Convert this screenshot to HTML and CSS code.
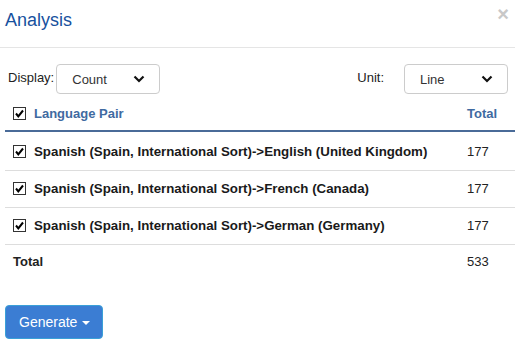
FILE: index.html
```html
<!DOCTYPE html>
<html>
<head>
<link rel="stylesheet" href="styles.css">
</head>
<body>
<div class="dialog">
  <div class="dialog-header">
    <h4 class="dialog-title">Analysis</h4>
    <span class="close">&times;</span>
  </div>
  <div class="dialog-body">
    <div class="options">
      <div class="option">
        <label>Display:</label>
        <div class="select">
          <span>Count</span>
          <svg width="12" height="8" viewBox="0 0 12 8"><polyline points="1.5,1.5 6,6 10.5,1.5" fill="none" stroke="#111" stroke-width="2.2"/></svg>
        </div>
      </div>
      <div class="option">
        <label class="unit-label">Unit:</label>
        <div class="select">
          <span>Line</span>
          <svg width="12" height="8" viewBox="0 0 12 8"><polyline points="1.5,1.5 6,6 10.5,1.5" fill="none" stroke="#111" stroke-width="2.2"/></svg>
        </div>
      </div>
    </div>
    <table class="pairs">
      <thead>
        <tr>
          <th><span class="check"><svg width="11" height="11" viewBox="0 0 11 11"><polyline points="2,5.5 4.3,8.3 9,2.5" fill="none" stroke="#000" stroke-width="2"/></svg></span>Language Pair</th>
          <th class="num">Total</th>
        </tr>
      </thead>
      <tbody>
        <tr class="first">
          <td class="pair"><span class="check"><svg width="11" height="11" viewBox="0 0 11 11"><polyline points="2,5.5 4.3,8.3 9,2.5" fill="none" stroke="#000" stroke-width="2"/></svg></span>Spanish (Spain, International Sort)-&gt;English (United Kingdom)</td>
          <td class="num">177</td>
        </tr>
        <tr>
          <td class="pair"><span class="check"><svg width="11" height="11" viewBox="0 0 11 11"><polyline points="2,5.5 4.3,8.3 9,2.5" fill="none" stroke="#000" stroke-width="2"/></svg></span>Spanish (Spain, International Sort)-&gt;French (Canada)</td>
          <td class="num">177</td>
        </tr>
        <tr>
          <td class="pair"><span class="check"><svg width="11" height="11" viewBox="0 0 11 11"><polyline points="2,5.5 4.3,8.3 9,2.5" fill="none" stroke="#000" stroke-width="2"/></svg></span>Spanish (Spain, International Sort)-&gt;German (Germany)</td>
          <td class="num">177</td>
        </tr>
        <tr class="total">
          <td><b>Total</b></td>
          <td class="num">533</td>
        </tr>
      </tbody>
    </table>
  </div>
  <div class="dialog-footer">
    <button class="btn-generate">Generate <span class="caret"></span></button>
  </div>
</div>
</body>
</html>
```

FILE: styles.css
```css
body {
  margin: 0;
  font-family: "Liberation Sans", Arial, sans-serif;
  font-size: 13px;
  color: #222;
  background: #fff;
}
.dialog {
  width: 515px;
}
.dialog-header {
  display: flex;
  justify-content: space-between;
  align-items: flex-start;
  height: 47px;
  padding: 0 7px 0 5px;
  border-bottom: 1px solid #e5e5e5;
}
.dialog-title {
  margin: 10px 0 0 0;
  font-size: 18px;
  font-weight: normal;
  line-height: 20px;
  color: #17519e;
}
.close {
  margin-top: 4px;
  margin-right: -1px;
  font-size: 20px;
  font-weight: bold;
  line-height: 20px;
  color: #c8c8c8;
}
.dialog-body {
  padding: 16px 0 0 5px;
}
.options {
  display: flex;
  justify-content: space-between;
  padding: 0 7px 0 3px;
}
.option {
  display: flex;
  align-items: flex-start;
}
.option label {
  line-height: 27px;
  margin-right: 2px;
}
.option .unit-label {
  margin-right: 20px;
}
.select {
  display: flex;
  justify-content: space-between;
  align-items: center;
  box-sizing: border-box;
  width: 104px;
  height: 30px;
  padding: 0 14px 0 15px;
  border: 1px solid #ccc;
  border-radius: 4px;
  color: #333;
}
.pairs {
  width: 510px;
  margin-top: 2px;
  border-collapse: collapse;
}
.pairs th {
  text-align: left;
  font-weight: bold;
  color: #3f6aa1;
  padding: 9px 8px 7px 8px;
  line-height: 18px;
  border-bottom: 2px solid #4a6b98;
}
.pairs td {
  padding: 9px 8px;
  line-height: 18px;
  border-bottom: 1px solid #ddd;
}
.pairs .first td {
  padding-top: 11px;
}
.pairs .pair {
  font-size: 13.3px;
  font-weight: bold;
  color: #1a1a1a;
}
.pairs .num {
  width: 40px;
  text-align: left;
}
.pairs td.num {
  color: #222;
}
.pairs .total td {
  padding-top: 8px;
  border-bottom: none;
}
.check {
  display: inline-block;
  box-sizing: border-box;
  width: 13px;
  height: 13px;
  margin-right: 8px;
  vertical-align: -2px;
  border: 1px solid #333;
  background: #fff;
}
.check svg {
  display: block;
}
.dialog-footer {
  padding: 25px 0 0 5px;
}
.btn-generate {
  box-sizing: border-box;
  width: 98px;
  height: 34px;
  padding: 0 10px 0 13px;
  text-align: left;
  white-space: nowrap;
  font-family: "Liberation Sans", Arial, sans-serif;
  font-size: 14px;
  color: #fff;
  background: #3b7dd3;
  border: 1px solid #3aa0d8;
  border-radius: 4px;
}
.caret {
  display: inline-block;
  width: 0;
  height: 0;
  margin-left: 1px;
  vertical-align: middle;
  border-top: 4px solid #fff;
  border-left: 4px solid transparent;
  border-right: 4px solid transparent;
}
```
